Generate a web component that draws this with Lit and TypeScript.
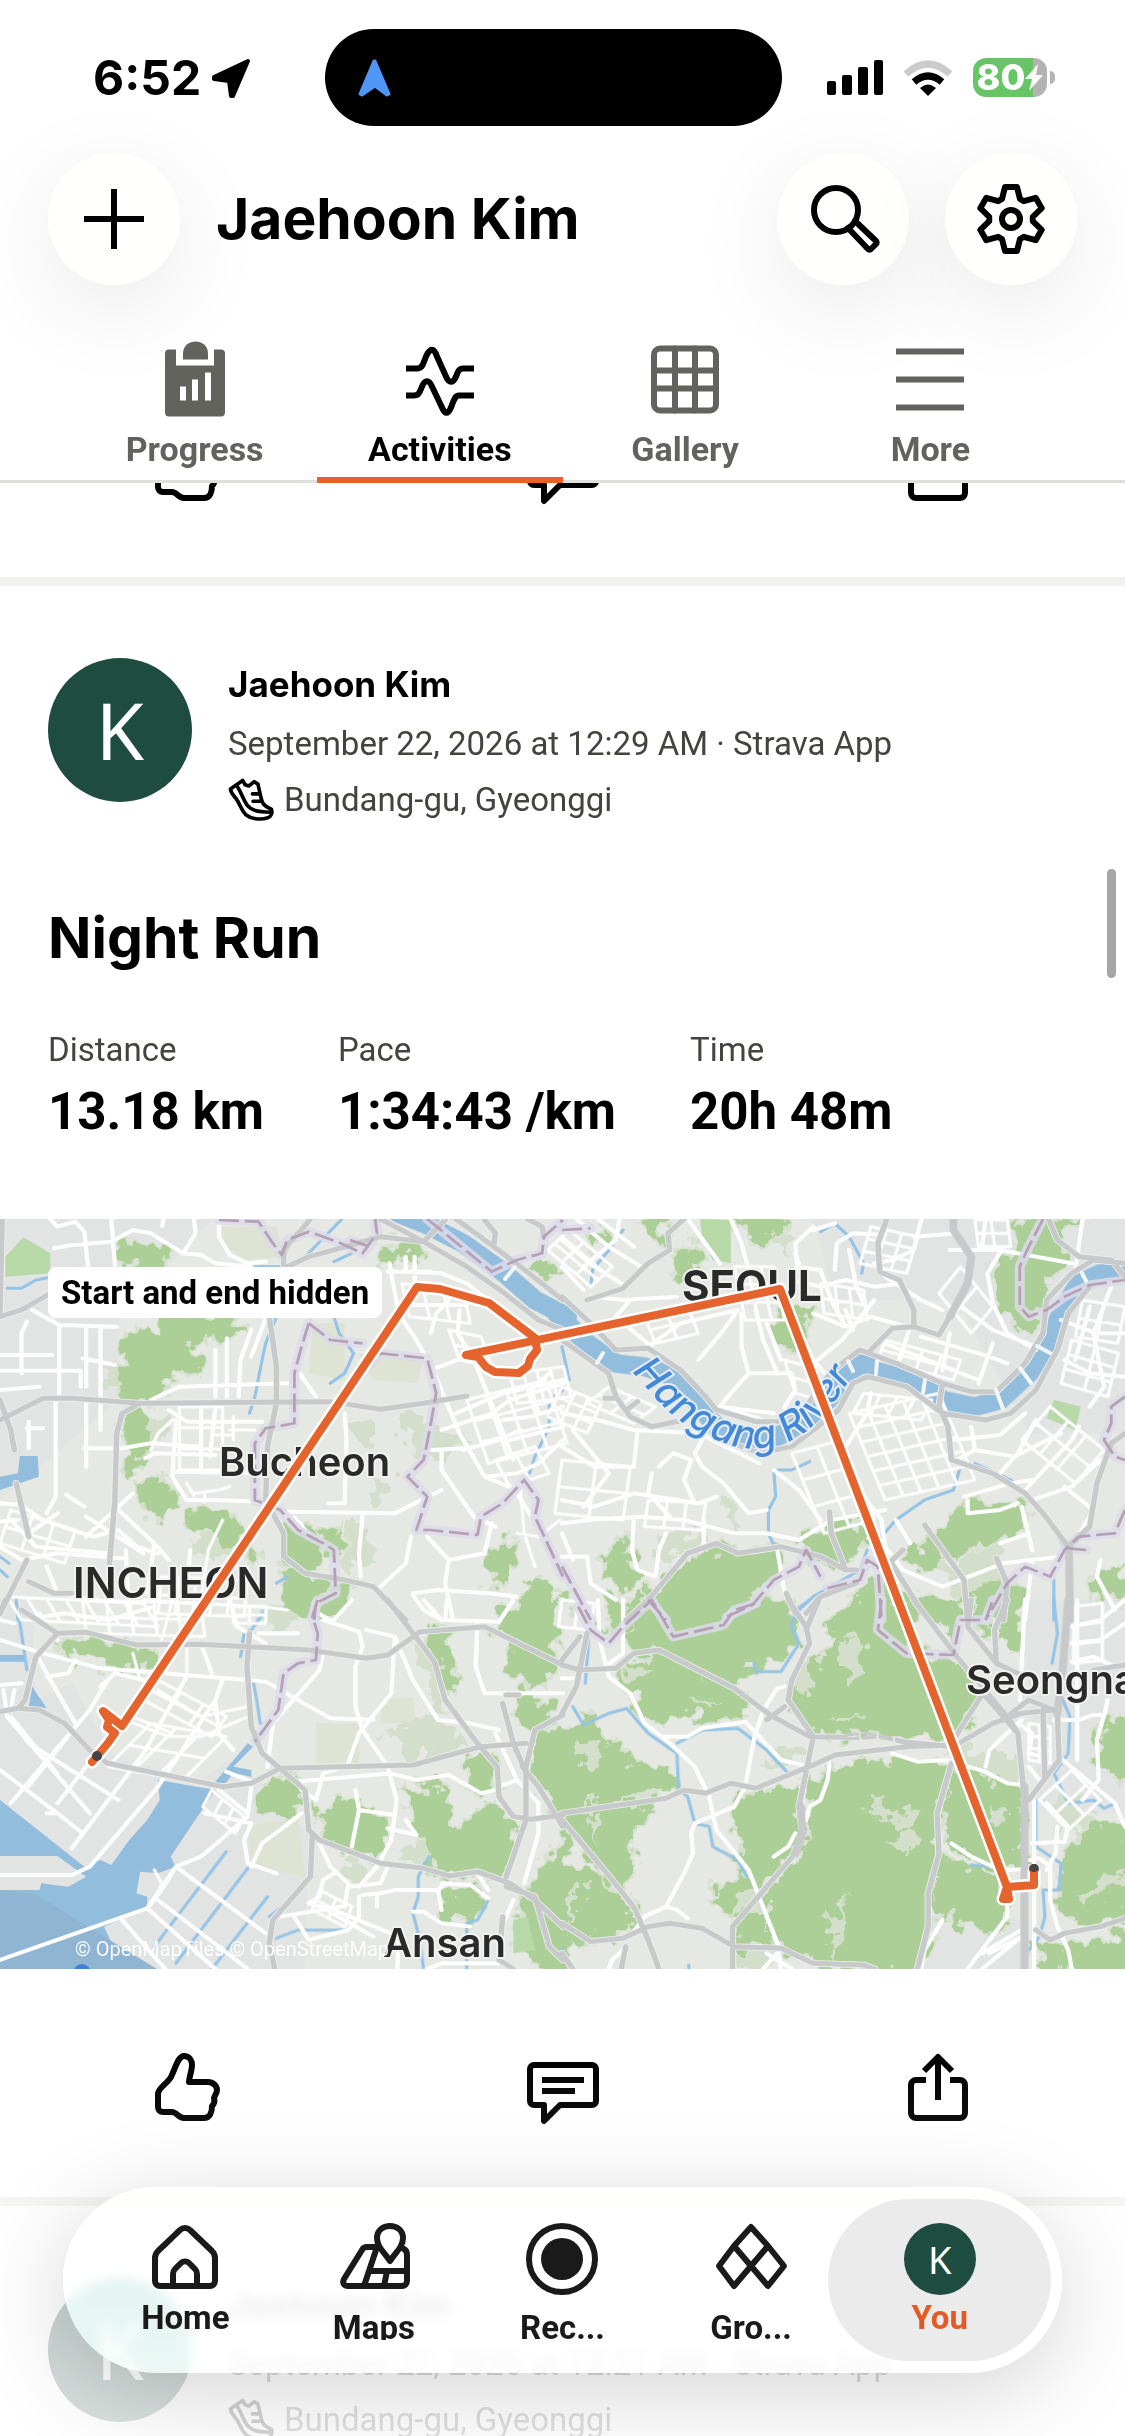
import { LitElement, html, svg, css, nothing } from "lit";
import { customElement, property } from "lit/decorators.js";

/* ---------- map data ---------- */

/** Street grid spanned by the vectors u and v, with nu x nv blocks. */
const grid = (
  x: number, y: number, ux: number, uy: number, vx: number, vy: number, nu: number, nv: number,
): string => {
  let d = "";
  for (let j = 0; j <= nv; j++) {
    const a = x + (vx * j) / nv, b = y + (vy * j) / nv;
    d += `M${a} ${b}l${ux} ${uy}`;
  }
  for (let i = 0; i <= nu; i++) {
    const a = x + (ux * i) / nu, b = y + (uy * i) / nu;
    d += `M${a} ${b}l${vx} ${vy}`;
  }
  return d;
};

interface Tile {
  at: string;
  land: string;
  sand: string;
  pale: string;
  green: string;
  park: string;
  sea: string;
  islands: string;
  river: string;
  creek: string;
  street: string;
  minor: string;
  road: string;
  wide: string;
  border: string;
}

const S = "scale(0.359 0.3333)";

const tiles: Tile[] = [
  {
    at: `translate(0 -19) ${S}`,
    land: "M0 50H600L330 350V600L0 900Z",
    sand: "M620 80 770 80 790 170 680 180 620 130ZM870 370 960 370 960 540 860 520ZM1000 460 1180 480 1160 550 1040 540Z",
    pale: "M410 640 480 650 450 740 415 730ZM980 670 1050 660 1040 740 1000 740ZM1110 650 1200 640 1230 700 1290 700 1290 750 1200 780 1130 740ZM1020 830 1100 830 1100 880 1040 915ZM960 960 1010 960 1050 1090 960 1110ZM520 1010 600 1000 690 1060 640 1090 540 1060ZM290 500 330 500 330 570 290 570Z",
    green: "M325 140 345 130 400 140 470 135 460 200 400 195 335 200ZM360 400 400 385 460 400 450 350 640 350 690 395 620 412 530 430 560 520 500 510 460 540 430 600 380 600 330 560 340 460ZM345 640 380 625 410 670 415 740 390 780 360 820 340 790 370 740 345 690ZM395 850 470 850 480 915 440 945 400 925ZM535 940 600 935 650 960 680 1010 630 1040 600 1000 540 975ZM690 1040 720 1045 720 1090 700 1090ZM795 980 830 975 900 1020 880 1100 800 1095ZM900 1000 940 990 945 1050 920 1060ZM790 1120 860 1110 900 1150 890 1210 850 1240 800 1230ZM930 1150 975 1150 970 1200 930 1240 900 1230ZM1055 130 1170 135 1165 165 1120 160 1095 195 1065 180ZM1465 195 1520 185 1545 215 1520 240ZM1400 1025 1430 1020 1425 1100 1405 1145 1365 1150 1365 1080ZM1480 1150 1530 1150 1530 1200 1460 1210Z",
    park: "M15 230 15 170 65 112 140 160 140 220Z",
    sea: "M55 768 105 768 108 830 0 870 0 830 50 820Z",
    islands: "",
    river: "M1110 40 1190 75 1290 130 1400 215 1490 300 1580 350",
    creek: "M20 265 60 265 100 240 140 232M950 60 850 170 800 200 700 200M980 160 930 185M770 350 740 430 730 480 710 590 695 640M930 350 945 400 985 460 960 520 920 550M1568 570 1530 600 1530 680 1490 770 1475 820M45 1200 50 1260M0 1070 25 1090M0 1110 20 1130M770 1150 800 1130",
    street:
      "M140 57 160 80 210 65 235 95 245 200M310 57 320 195M150 145 200 135 310 125 370 90 420 100 510 160 560 165 600 190 700 200M540 57 545 100 510 160M610 57 610 110 640 165 690 190 740 185M455 57 452 78M0 465H145M230 475 320 495M0 512H225V560M0 570 110 560M75 365 60 400 60 520M165 375 165 600M90 330 165 375 325 380M240 380 240 560M280 380V690M240 610V800M75 685H120M80 665V745M155 600V890L130 940M235 745H340L420 730 560 740M600 450V590M632 415V590M700 390 670 480 665 590M420 600 500 560 800 550M470 630 520 665 730 665M490 660 480 830 520 900 590 900 720 905M560 630V800M600 620 585 770M405 775 430 760 600 765M490 815 720 820M740 355 700 470M835 520 880 590M960 640 965 720 960 910 915 910M800 935 1100 940 1230 870M1010 945 1000 1060 1005 1130M0 910 60 915 110 955 200 990 260 1010 330 990 380 1040 440 1060M30 960 100 1040 300 1060M0 1040 60 1080 160 1060 340 1075M370 880 300 950 240 1010M185 885 235 920M330 930 430 1030 470 1080M0 965 50 960M80 1000 160 940M240 950 400 1060M130 1100 160 1180 270 1200M430 1030 410 1180M530 1050 520 1180M350 1050 360 1250M1085 190 1110 340 1160 420 1210 520 1280 700 1350 830 1440 870M1130 170V215L1230 220 1300 250 1370 310M1155 170V240M1080 215H1200M1150 315H1300M1280 330 1275 400 1320 480 1380 640 1430 780M1200 510 1300 470M1200 400 1215 340 1250 300M1230 690 1370 640 1420 600 1568 550M1270 640 1400 580 1568 540M1290 750 1390 720 1450 690M1200 750 1300 745M1350 830 1440 820 1500 790 1568 720M1230 750V810L1320 950 1380 980M1145 1010 1130 1090 1060 1160M1190 1010 1250 1080 1350 1060 1370 970M1440 880 1480 950M1250 1080 1240 1150 1260 1250M1150 1185 1180 1230 1230 1260M1150 1180 1220 1170 1360 1180 1440 1190M1568 620 1480 650 1400 660M1568 680 1420 720M1530 520 1480 570 1500 640",
    minor:
      grid(20, 1190, 380, 20, 40, 70, 7, 1) + grid(1300, 600, 220, -60, 60, 190, 4, 3) + grid(500, 620, 120, 0, 0, 190, 2, 3) +
      grid(1120, 250, 170, 20, 20, 100, 3, 1) + grid(1420, 520, 150, -20, 20, 90, 4, 2) + grid(450, 1130, 240, 10, -10, 110, 5, 2) +
      grid(30, 930, 180, 60, -30, 100, 3, 2) + grid(1250, 390, 90, 20, 30, 90, 1, 2) + grid(1380, 780, 110, -40, 40, 80, 2, 1) +
      "M420 750 440 700 480 660M540 880 610 870 640 860M860 1000 820 950M1440 1000 1500 1010 1560 960M620 960 580 1050 560 1200M1450 870 1460 1000 1490 1100M400 1200 550 1210 730 1220 800 1230M640 690H710M650 650V720M590 705H650M520 850 540 885M570 885V905",
    road: "M6 57 0 340M0 350 60 330 140 280M0 660 120 595 200 595 390 610 920 605 1060 628 1180 610 1300 588M0 600 30 690 40 750M45 850 80 1010M390 610 340 640 325 700 320 900 305 1090M75 1080 0 1240M80 1145 150 1180 200 1180M865 57 790 150 790 200M750 350 770 500 770 610 745 740 740 900 790 1000 790 1070 850 1120 960 1140 1040 1160 1130 1260M1060 57 1180 125 1300 200 1400 275 1500 360 1568 390M800 200 860 170 930 150 1060 110 1180 125 1240 60M1270 57 1350 120 1450 200 1568 300M1350 60 1380 100 1375 140M1470 57 1510 80 1515 110",
    wide: "",
    border: "M610 60 720 65 760 130 785 165 800 120 860 95 950 130 1010 160 1050 100 1045 57M975 120 1030 140M860 370 840 440 820 520 820 670 740 685 710 730 710 900 780 930 830 990 900 1030 930 1050 935 1180 880 1210 875 1260M860 370 920 420 1010 430M1010 520 1060 460 1190 475 1215 580 1195 700 1180 780 1135 830 1190 890 1160 990 1200 990 1330 1005 1340 950 1400 910 1460 840 1500 900 1490 950 1568 1130M1190 57 1370 215 1440 180 1510 160 1515 110 1568 60",
  },
  {
    at: `translate(562 -19) ${S}`,
    land: "M700 57H1568V700H1300L1100 300H760Z",
    sand: "",
    pale: "M1050 1110 1230 1020 1240 1130 1120 1200ZM250 1000 380 990 400 1040 260 1080ZM440 900 480 900 490 980 450 960ZM600 100 650 110 640 160 610 150Z",
    green: "M235 57 310 57 280 90 275 145 240 100ZM320 135 370 130 400 190 370 215 360 260 320 200ZM480 57 620 57 610 100 540 115 500 80ZM80 110 120 85 110 130 85 140ZM590 345 680 345 670 440 630 455 600 400ZM1270 57 1440 57 1380 100 1400 180 1340 260 1310 390 1270 380 1220 310 1200 230 1220 170 1270 160ZM130 1030 190 1010 180 1100 210 1150 180 1170 135 1130ZM220 1190 360 1080 430 1050 600 1040 600 1100 520 1200 460 1260 210 1260ZM660 1020 820 950 850 1000 810 1060 760 1110 700 1060ZM960 1080 1130 910 1290 920 1290 990 1180 1030 1080 1070 1050 1110ZM1480 1130 1568 1100 1568 1180 1500 1200ZM820 1180 910 1110 920 1260 800 1260ZM960 1180 1100 1200 1080 1260 960 1260ZM1140 1180 1220 1130 1290 1180 1270 1260 1140 1260ZM130 1200 200 1200 200 1260 140 1260Z",
    park: "M1370 600 1445 620 1430 690 1350 655ZM385 57 470 60 470 190 420 180 390 110Z",
    sea: "",
    islands: "",
    river: "M-12 345 70 430 150 490 230 500 310 530 370 600 430 680 520 720 600 710 680 660 740 600 790 530 830 490 900 510 1000 550 1060 600 1150 620 1220 600 1300 520 1360 420 1390 340 1440 250 1500 220 1568 210",
    creek: "M170 90 130 150 85 210 80 260M720 95 760 70 800 110 840 190 835 220M590 810 595 890 575 930 575 1000 600 1060M600 810 640 810 690 785M890 1010 930 960 1010 900 1090 870 1110 800M1150 790 1250 840 1330 920 1400 1040M850 1050 830 1110 700 1190 650 1240M1370 1140 1370 1260M0 440 20 540",
    street:
      "M0 120 90 200 180 260M40 57 130 140 220 200M100 57 200 140M0 200 60 270M160 57 150 120 60 200M350 57 440 190M470 57 500 130 515 190M650 160 660 190 640 240M700 80 650 130 655 200 720 210M760 210 765 130 810 100 900 105M700 90 760 70M190 300 150 350 250 440M80 290 170 300 320 290M240 440 330 370 490 330M380 480 450 390 490 330M500 340 500 440 520 520 470 580 440 620 590 640M520 520H640L650 570 620 620 625 660M540 330 560 420 600 520M570 370 610 480M440 620 560 660M650 360 700 480 740 530M700 340 790 380 860 350 960 380M790 330 810 390M640 240 720 260 790 240 870 260 950 250M720 210 750 300 790 380M800 150 820 260 850 330M870 300 780 420 700 490M900 230 1000 300 1060 330M980 110 1100 100M1000 60 980 150 920 180 870 190M1080 150 1220 150 1420 190M1180 57 1170 140 1230 150M1225 150 1185 220 1200 310 1240 400 1320 450M1100 310 1200 390 1320 440M1000 410 1190 470 1240 490M900 430 1160 540M970 380 940 480M1080 400 1060 510M1200 430 1160 550M0 640 100 660 200 690 380 700 550 790M0 740 90 800 200 800 210 700M0 900 90 920 200 880 380 910 430 890M30 690 130 820 60 920M250 820 240 880 300 950M270 800 310 760 360 780 340 840 370 910M400 700 370 760 390 800 450 850 520 940 570 930M60 960 220 950 340 960 480 1000 570 1000 660 1020 750 960 900 930M0 970 80 960M590 810 660 870 720 960M200 960 195 1050 210 1110 260 1130 270 1050 290 1000M395 960V1030M0 1070H70L80 1150 150 1200M860 580 850 640 790 740M820 860 890 960 900 1040 950 1110 1060 1160 1230 1090 1390 1070M1090 720 1220 705 1290 640M1100 780 1150 750 1260 770 1390 700M1140 680 1150 750M1130 900 1130 940 1220 930 1270 910M1120 890 1250 850 1310 840M1220 820 1270 760 1320 660M1290 870 1420 720 1440 680M1310 900 1420 860 1500 780M1400 480 1470 520 1568 530M1390 360 1490 400 1568 400M1470 320 1430 480M1530 260 1480 400 1510 560 1470 620M1280 920 1310 1050M1450 57 1430 210M1400 860 1480 930 1420 1040M930 960 970 1030M0 1000 30 1080M1220 1030 1300 1000M600 1050 620 1180M1310 1080 1290 1260M1500 1080 1490 1130 1540 1230",
    minor:
      grid(800, 640, 250, -60, 100, 260, 5, 6) + grid(640, 760, 140, -40, 90, 240, 2, 3) + grid(0, 560, 110, 50, -40, 90, 3, 3) +
      grid(130, 560, 130, 60, -60, 50, 2, 2) + grid(860, 80, 130, 30, -30, 110, 3, 3) + grid(1150, 60, 90, 0, 10, 80, 2, 2) +
      grid(20, 90, 120, 110, -60, 60, 3, 3) + grid(1280, 720, 150, 130, 80, -100, 3, 2) + grid(1420, 420, 130, 40, -30, 130, 2, 3) +
      grid(480, 200, 110, 0, 30, 160, 3, 3) + grid(900, 420, 210, 60, -20, 60, 4, 2) + grid(840, 580, 190, 20, -30, 60, 4, 1) + grid(230, 350, 120, -30, 30, 80, 2, 2) +
      grid(0, 780, 190, 20, -20, 160, 2, 2) + grid(720, 250, 120, 20, 10, 90, 3, 2) + grid(1110, 200, 90, 120, -60, 80, 2, 1) +
      grid(1450, 300, 118, 20, -20, 110, 2, 2) + grid(240, 900, 160, 10, -10, 80, 3, 1) + grid(620, 480, 70, 20, 30, 100, 1, 2),
    road: "M0 290 80 370 150 450 240 445 330 510 400 590 430 630 540 665 600 665 680 620 740 530 780 490 830 450 930 490 1060 550 1140 575 1210 575 1290 490 1340 400 1350 300 1420 220 1480 180 1568 190M0 420 130 520 150 590 190 650 250 680 340 660M440 715 550 760 640 740 700 690 770 630 810 550 850 530 960 560 1060 640 1180 660 1250 640 1320 570 1380 450 1410 340 1470 260M120 595H150M180 630 210 605M70 300 170 265 240 190 300 150 295 100 340 57M905 57 880 130 885 215 940 240 980 330 980 380 920 385 860 450M980 380 1050 405 1080 350M1060 550 1050 620 1075 680 1085 780 1200 820 1290 880 1340 940 1410 1040 1470 980 1490 850 1530 730 1568 700M745 935 750 1000 790 1110M240 1200 350 1060 430 1030 490 1060 610 1040 720 1070 790 1110 820 1110M1010 975 1120 1140 1130 1260M950 1050 915 1085 1000 1230M1210 1075 1240 1150 1230 1260M240 1200 180 1260M1355 57 1380 120 1440 170 1530 180 1568 230M680 1240 720 1190 820 1150M625 1180 650 1240",
    wide: "M1080 350 1130 250 1140 170 1090 90 1090 57M1412 1040 1415 1260",
    border: "M0 90 80 85M0 1100 50 1200 80 1260M460 1250 530 1215 590 1140 660 1100 680 1050 720 1130M740 1165 830 1140 850 1080 880 1100 890 1260M1340 57 1300 140 1275 200 1275 320 1300 350 1350 330 1400 290 1470 255 1568 240M1568 590 1530 620 1530 670 1510 720 1540 770 1568 780M1568 930 1540 1000 1440 1010 1400 1050 1360 1130 1290 1100 1240 1150 1180 1260M1410 1045 1460 1050M240 1200 290 1260",
  },
  {
    at: `translate(0 381) ${S}`,
    land: "M0 0H90L100 300 200 250 320 470 560 540 640 480 720 540 860 700 850 1107H0Z",
    sand: "M690 680 830 650 850 830 700 800ZM1060 300 1150 290 1160 370 1060 370ZM880 370 1000 370 1000 490 880 490Z",
    pale: "M1060 400 1200 330 1320 440 1160 470ZM1100 770 1200 700 1200 800ZM1150 130 1210 110 1250 330 1200 300ZM730 40 820 30 820 80 750 80ZM960 790 1030 790 1010 850 970 850Z",
    green: "M160 130 250 115 310 130 430 160 440 205 380 200 290 190 200 170ZM795 0 950 0 900 50 830 30ZM1190 100 1250 100 1270 270 1240 250ZM1400 30 1530 0 1568 0 1540 100 1550 200 1480 270 1430 220 1440 120 1390 90ZM1300 470 1360 460 1380 570 1310 560ZM1500 400 1580 380 1580 720 1540 600 1480 520ZM1130 570 1235 550 1240 640 1290 680 1360 620 1400 650 1430 680 1400 830 1250 820 1190 790 1200 730 1160 700ZM880 630 990 600 1000 640 1075 650 1060 780 960 740 900 690ZM720 600 760 540 830 545 840 620 780 635ZM1480 850 1580 690 1580 1120 1510 1120 1440 1000ZM1240 890 1330 870 1360 910 1310 940 1280 965 1240 950ZM1450 300 1530 300 1530 360 1480 380 1450 350Z",
    park: "M1430 960 1470 950 1490 1050 1430 1060Z",
    sea: "M0 600 235 800 280 780 310 795 360 720 410 660 445 600 440 540 600 570 475 770 490 800 440 820 390 815 380 880 410 890 410 925 290 980 320 1050 460 1120 0 1120ZM600 545 690 430 705 440 650 500 700 510 700 530 650 520 610 575ZM90 260 130 325 80 320ZM0 165H70V185H0Z",
    islands: "M0 768H160L240 830 190 860 115 850 110 870H0Z",
    river: "",
    creek: "M50 30 75 210M740 30 700 90 680 100 670 170M705 240 715 300 725 370M630 755 500 940M690 805 490 1090M745 890 590 1107M810 900 750 950M770 1015 830 990 970 990M1195 770 1165 830 1165 890 1150 940 1165 1000 1180 1107M1360 900 1330 960 1300 970 1300 1107M500 940 430 1040",
    street:
      "M0 825H200L250 800 440 560 600 300M0 1080 410 925 490 800 560 770 690 650 700 560M20 350 250 640M30 350 80 430 330 600M0 510 160 640 230 700M200 745 400 460 520 230M30 610 250 330 300 240M160 610 240 500M130 640 160 640M0 120 120 160 280 205 690 240M0 255 60 250M10 270 20 350M40 270 30 330M130 230 190 220 210 180M110 40 160 120M120 50 180 40 300 60 430 20M280 260 320 220 400 240M100 160 140 240 210 370M560 130 590 220M620 240 600 300 610 400 650 450M640 0 660 80 740 130M720 100H830M0 60 40 70M690 240 740 245 920 355 1040 360M900 60 1000 95 1010 140 990 200 990 320 1010 390 1080 500 1105 600 1090 720 1050 800 1000 860M930 60 980 0M1020 90 1100 110 1150 240 1220 360 1310 370 1390 390M1100 110 1090 280 1000 400 970 490M920 60 870 30M900 160 890 210 760 370 745 500M1180 0 1230 60 1390 65 1430 0M1240 60 1245 0M1330 70 1325 200 1350 280H1568M1380 400 1440 540 1500 610 1500 700 1460 850M1440 540 1390 560M820 545 1090 520 1160 540 1250 525 1340 580 1380 570M840 570 880 600 900 520 960 500M990 570 1000 630 1100 645M1000 630 980 740M1080 685 1160 705 1130 660M630 515 700 545M570 640 700 670 680 720 690 790 770 820M610 570 690 640M490 800 740 1000M440 900 690 1107M410 925 600 1107M340 960 460 1107M700 800 730 730 780 690 840 640M890 730 920 800 970 850 960 920M930 820 900 840 890 890 860 910M860 910 930 930 1110 1010 1107 1107M780 950 950 920M970 860 1060 850 1080 800M1010 885 1060 880 1100 870 1220 870 1240 850M1050 920V890M1000 890 1000 950 970 990 860 1020 820 950M1150 935 1180 935 1230 970 1310 980M1220 870 1230 930M1230 850 1310 855 1360 895M1330 820 1360 870M410 925 450 870 490 800M1430 900 1390 1000M910 930 1040 1010M1190 1107 1230 1090 1390 1090",
    minor:
      grid(400, 300, 190, 110, 40, -60, 3, 2) + grid(230, 0, 330, 10, 10, 100, 5, 2) + grid(420, 370, 210, 40, -120, 130, 3, 2) +
      grid(590, 570, 90, 80, -25, 50, 3, 1) + grid(890, 870, 90, 50, -20, 60, 2, 2) + grid(650, 20, 90, 0, 0, 50, 2, 2) +
      "M300 340 470 410 560 410 690 350M370 350 480 400M440 270 560 350 690 320M480 0 450 120M520 130 520 230M370 160 390 240M430 810 450 850 440 880M40 360 100 440 160 520M80 560 190 410",
    road: "M60 30 160 100 240 97 380 135 560 133 860 150 1020 175 1080 165 1170 95 1350 80 1568 195M160 100 100 170 70 300 50 325 0 335M50 325 110 330 180 370 250 450 300 490 620 560 700 550 780 505 1150 495 1340 440 1465 430M695 100 688 200 700 380 730 460 780 505 850 570 860 690 890 720 1060 790 1180 805 1250 828 1330 815 1420 850 1490 900 1568 980M870 700 865 830 760 960 750 1030 765 1107M1080 0 1210 185 1240 300 1330 430 1385 500 1390 590 1430 650 1480 658 1568 645M1400 310 1430 430 1470 530M1568 345 1490 390 1465 500 1465 660 1410 830M1410 860 1490 890 1530 1040 1568 1080M1400 950 1390 1080 1430 1107M1455 500 1500 560 1568 680M0 40 15 0M1410 285H1445",
    wide: "",
    border: "M885 0 870 50 885 100 880 180 830 190 790 220 775 330 710 425",
  },
  {
    at: `translate(562 381) ${S}`,
    land: "M1280 0H1568V640H1330ZM1040 930 1290 960V1107H1010Z",
    sand: "",
    pale: "M1070 450 1280 460 1280 590 1100 510ZM420 870 560 800 580 900 480 960ZM480 1050 590 1050 600 1107 490 1107ZM600 430 680 430 640 500 560 500ZM1380 560 1500 640 1440 700 1390 680Z",
    green: "M210 60 260 0 640 0 650 60 640 130 600 190 540 190 480 260 300 160 200 150 170 110ZM160 190 300 170 480 270 520 330 440 370 340 330 290 370 230 350 180 270ZM-12 380 60 370 180 450 200 500 300 500 320 560 -12 630ZM-12 640 260 600 180 720 200 800 150 850 100 800ZM-12 780 100 830 190 920 200 980 100 1020 30 1010 -12 970ZM740 60 860 0 940 0 960 160 1100 180 1160 290 1090 410 700 400 640 300 700 200 750 130ZM480 610 560 580 650 560 660 720 540 860 500 790ZM430 850 510 830 540 860 480 930 420 920ZM700 540 820 480 1080 500 1040 650 1040 780 1020 1000 990 1120 860 1120 680 1080 600 1040 560 900 680 740 700 640ZM490 960 550 940 590 1030 480 1040ZM1090 510 1270 560 1280 800 1200 800 1090 740 1060 640ZM1050 780 1200 830 1240 920 1200 1000 1040 920ZM1000 0 1120 0 1090 120 1040 60ZM1140 0 1200 0 1180 110ZM1230 0 1270 0 1270 150 1220 120ZM1500 370 1580 350 1580 540 1510 520ZM1400 760 1470 680 1580 690 1580 960 1440 970 1380 900ZM1400 1050 1580 1000 1580 1120 1420 1120ZM1330 1040 1400 1050 1400 1120 1330 1120ZM140 20 200 20 180 80 120 80Z",
    park: "",
    sea: "",
    islands: "",
    river: "",
    creek: "M690 0 650 30 640 80 660 130 610 215 540 215 535 190M30 320 60 375 130 340 180 325 240 400 320 460 325 570 350 590 370 670 410 680 420 740 490 780 515 830M320 430 390 390 490 385 570 450 630 520M1370 0 1380 100 1365 190M1395 300 1415 350 1410 460 1370 520 1410 610 1480 600 1510 625 1540 610M1320 600 1320 740 1390 790 1385 870 1340 870 1345 950 1330 1010 1300 1050M545 870 560 920M75 100 65 250M0 1050 15 1075M1140 795 1190 800M353 1095V1107",
    street:
      "M100 0 105 120 130 230 190 280 230 370 290 420 370 500 410 590 430 690 520 810 560 920 600 1030 610 1107M280 410H350L390 385 510 365 550 410 610 480 670 495M540 400 560 330 600 265 620 260M540 390 510 560 480 620 370 670 360 700 365 760 340 820 320 860 290 920 230 950 190 1010M290 920 320 930 350 955M170 0V160M745 490 740 540 720 600 690 620 680 660M650 700 630 740 590 770M920 460 990 485 1070 480 1130 500 1180 515 1240 550 1280 555M1085 730 1140 770 1200 800M1290 0 1285 100 1275 300M1180 500 1190 450 1250 390M1270 370 1310 400 1300 460 1340 470M1435 0V480M1420 80 1500 60 1568 0M1420 130 1500 120 1568 70M1420 185 1480 170 1540 200M1370 360 1440 360 1480 345 1510 345 1490 420 1495 540 1450 600M1520 300 1510 350M1300 500 1330 540M1395 480 1540 610 1568 680M1315 600V1107M1310 730 1400 725 1410 680 1350 610M1380 680 1375 760 1350 810M1300 780 1330 775 1360 800 1360 900 1380 980 1410 1050 1420 1107M1240 810 1280 808M1240 920 1240 950 1170 1050 1130 1107M1170 1060 1280 990M1190 1060 1280 1010 1170 1107M1060 960 1010 1050 1000 1107M600 1060 560 1107M180 1040 140 1080 130 1107M170 160 120 200M0 235H40M570 1060 640 1107M1280 360 1240 400",
    minor: grid(1330, 600, 90, -90, 80, 90, 2, 2) + grid(1425, 20, 80, -10, 0, 170, 1, 3) + grid(0, 0, 90, 10, -10, 80, 2, 1) + grid(1300, 370, 60, 10, 0, 110, 2, 3),
    road: "M0 195 50 210 150 205 200 160 270 150 480 265 580 345 690 410 790 412M950 425 1090 440 1200 370 1280 340 1370 330M0 640 290 595 340 570 400 580 470 550 540 565 700 495 760 465 960 440 1090 435M0 660 110 800 200 920 240 1020 270 1107M0 970 80 1025 170 1015 240 980 300 970 390 985 480 1040 610 1045 700 1090 840 1095 870 1107M475 1107 475 980 650 760 670 700 660 620 700 410 630 300 640 240 690 130 680 80 630 0M680 90 715 0M1085 490 1045 640 1050 760 1020 880 1020 980 990 1107M0 340 40 260 70 100M980 0 1100 170 1240 350 1270 400 1285 560M1140 0 1130 80 1210 190 1290 230M1240 0 1205 90 1210 190M1380 340 1385 480 1300 600M1340 330 1345 530M1090 420 1190 250M1320 990 1360 1020 1400 1000 1500 980 1568 955M1480 210 1568 195M570 360 620 320M1180 290 1270 400M1240 350 1300 300 1370 330M178 1040 165 1107M0 1060 30 1107M0 180 50 110",
    wide: "M1288 560V1107M1410 0 1395 200 1380 340M650 760 670 700 665 620",
    border: "M45 20 80 90 130 130 170 80 250 0 310 110 450 75 480 30 540 10M890 0 880 90 960 160 1090 165 1110 60 1180 60 1200 0",
  },
];

const clearings =
  "M760 100 800 90 835 180 825 265 785 250 800 190ZM850 620 900 610 930 650 980 620 990 660 960 690 1000 720 940 700ZM740 930 760 960 790 900 780 1050 750 1080 760 1000 735 960ZM170 190 280 240 200 240ZM340 270 450 320 360 310ZM40 440 110 420 90 520 60 500ZM0 900 60 840 30 960ZM1180 610 1260 640 1200 680ZM1420 900 1568 800 1568 830 1460 920ZM720 350 850 350 790 370ZM160 20 190 0 180 40ZM80 640 110 640 90 720ZM640 200 700 180 700 260 640 270ZM900 720 1000 700 960 760Z";

const routeD =
  "M92 543 108 524 115 514 107 508 109 501 103 492 122 507 417 68 440 70 489 84 535 119 537 131 530 140 528 147 519 154 495 153 486 148 478 138 466 136 780 70 1007 668 1009 680 1003 680 1007 668 1034 666 1034 652";

@customElement("activity-map")
class ActivityMap extends LitElement {
  static styles = css`
    :host { display: block; position: relative; overflow: hidden; }
    .map { display: block; width: 100%; height: auto; background: #e6e8e3; }
    .line { fill: none; stroke-linecap: round; stroke-linejoin: round; }
    .land { fill: #e2e4e4; }
    .sand { fill: #dfe3d3; }
    .pale { fill: #d3dfca; }
    .verge { fill: #d7e1cf; stroke: #d7e1cf; stroke-width: 26; stroke-linejoin: round; }
    .green { fill: #abcf96; stroke: #abcf96; stroke-width: 8; stroke-linejoin: round; }
    .park { fill: #b6d9a7; }
    .sea { fill: #92bddc; }
    .river { stroke: #92bddc; stroke-width: 56; }
    .creek { stroke: #96c4e6; stroke-width: 9; }
    .street { stroke: #fdfdfd; stroke-width: 12; }
    .minor { stroke: #fdfdfd; stroke-width: 9; }
    .road-edge { stroke: #eceeec; stroke-width: 20; }
    .road { stroke: #c7c9cb; stroke-width: 15; }
    .wide { stroke: #c7c9cb; stroke-width: 22; }
    .halo { stroke: #dcdaea; stroke-width: 28; opacity: 0.85; }
    .dash { stroke: #b5a1b3; stroke-width: 8; stroke-dasharray: 56 16; stroke-linecap: butt; }
    .city {
      font-family: Inter, "Liberation Sans", sans-serif; font-size: 40px; font-weight: 600; fill: #2a2a2a;
      stroke: #f2f3f0; stroke-width: 4px; paint-order: stroke; stroke-linejoin: round;
    }
    .large { font-size: 42px; }
    .capital { font-size: 42px; font-weight: 700; }
    .hangang {
      font-family: Inter, "Liberation Sans", sans-serif; font-size: 39px; font-weight: 500; font-style: italic; fill: #4488d8;
      stroke: #e4edf4; stroke-width: 4px; paint-order: stroke;
    }
    .credit { font-family: Roboto, "Liberation Sans", sans-serif; font-size: 20px; fill: #fff; opacity: 0.9; }
    .case { stroke: #fff; stroke-width: 13; }
    .track { stroke: #e5642d; stroke-width: 8; }
    .badge {
      position: absolute; left: 48px; top: 48px; padding: 0 13px; border-radius: 8px; background: #fff; color: #000;
      font: 700 33px/51px var(--text);
    }
  `;

  private layer(key: keyof Tile, cls: string) {
    return svg`${tiles.map((t) => (t[key] ? svg`<g transform=${t.at}><path class=${cls} d=${t[key]}></path></g>` : nothing))}`;
  }

  render() {
    return html`
      <svg class="map" viewBox="0 0 1125 750" role="img" aria-label="Route map">
        <defs>
          <filter id="rough" x="0" y="0" width="100%" height="100%" filterUnits="userSpaceOnUse">
            <feTurbulence type="fractalNoise" baseFrequency="0.06" numOctaves="3" seed="4" />
            <feDisplacementMap in="SourceGraphic" scale="34" xChannelSelector="R" yChannelSelector="G" />
          </filter>
          <path id="river-line" d="M632 153C650 172 668 196 690 208C712 220 735 230 758 230C790 227 812 211 828 191C838 178 850 162 864 138" />
        </defs>
        ${this.layer("land", "land")} ${this.layer("sand", "sand")}
        <g filter="url(#rough)">
          ${this.layer("green", "verge")} ${this.layer("pale", "pale")} ${this.layer("green", "green")}
          <g transform=${tiles[3].at}><path class="pale" d=${clearings}></path></g>
        </g>
        ${this.layer("park", "park")} ${this.layer("sea", "sea")} ${this.layer("islands", "land")}
        <path d="M0 671 35 675 165 755 0 755Z" fill="#8fb5d3"></path>
        ${this.layer("river", "line river")} ${this.layer("creek", "line creek")}
        ${this.layer("minor", "line minor")} ${this.layer("street", "line street")}
        ${this.layer("road", "line road-edge")} ${this.layer("border", "line halo")}
        ${this.layer("road", "line road")} ${this.layer("wide", "line wide")} ${this.layer("border", "line dash")}
        <path class="line" stroke="#c7c9cb" stroke-width="3" stroke-dasharray="12 5" d="M846 516 865 514 905 522M846 520 880 518 905 524"></path>
        <path class="line" stroke="#f3f6f7" stroke-width="4" d="M597 144 603 134M505 60 515 48M848 142 853 152M877 142 876 155M925 161 923 174M996 171 1003 190M1020 149 1031 164M1037 127 1050 134M1082 54 1086 62"></path>
        <circle cx="82" cy="754" r="9" fill="#3f80d8"></circle>
        <text class="city" x="219" y="257">Bucheon</text>
        <text class="city large" x="73" y="379">INCHEON</text>
        <text class="city capital" x="682" y="82">SEOUL</text>
        <text class="city" x="383" y="738">Ansan</text>
        <text class="city" x="966" y="475">Seongnam</text>
        <text class="hangang"><textPath href="#river-line">Hangang River</textPath></text>
        <text class="credit" x="75" y="737">© OpenMapTiles © OpenStreetMap</text>
        <path class="line case" d=${routeD}></path>
        <circle cx="1034" cy="650" r="5" fill="#444"></circle>
        <path class="line track" d=${routeD}></path>
        <circle cx="97" cy="537" r="5" fill="#444"></circle>
        <circle cx="1034" cy="649" r="4" fill="#444"></circle>
      </svg>
      <span class="badge">Start and end hidden</span>
    `;
  }
}

/* ---------- icons ---------- */

const gearPath = (() => {
  const tooth = [[-9, -20], [-6, -32], [6, -32], [9, -20]];
  const pts: string[] = [];
  for (let k = 0; k < 6; k++) {
    const a = (k * Math.PI) / 3;
    for (const [x, y] of tooth) {
      pts.push(`${(36 + x * Math.cos(a) - y * Math.sin(a)).toFixed(1)} ${(36 + x * Math.sin(a) + y * Math.cos(a)).toFixed(1)}`);
    }
  }
  return `M${pts.join("L")}Z`;
})();

const glyphs = {
  plus: svg`<path d="M36 6v60M6 36h60" stroke-linecap="butt"></path>`,
  search: svg`<circle cx="29" cy="27" r="22"></circle><path d="M41 45 61 66a2 2 0 0 0 3 0l5-5a2 2 0 0 0 0-3L48 38"></path>`,
  gear: svg`<path d=${gearPath}></path><circle cx="36" cy="36" r="9"></circle>`,
  progress: svg`<g fill="currentColor" stroke="none"><path d="M10 6h7v16h38V6h7a4 4 0 0 1 4 4v59a4 4 0 0 1-4 4H10a4 4 0 0 1-4-4V10a4 4 0 0 1 4-4z"></path><path d="M24 16v-6c0-16 25-16 25 0v6z"></path></g><path stroke="#fff" stroke-linecap="butt" d="M24 57V43M36 57V36M49 57V29"></path>`,
  activities: svg`<path stroke-linecap="butt" d="M2 25h11c5 0 6-4 9-12 4-9 8-9 11 0l9 20c3 7 7 7 10 0 2-5 3-8 7-8h11M2 52h8c5 0 6-4 8-9 3-7 7-7 10 0l10 21c3 7 6 7 9 0 3-8 4-12 8-12h15"></path>`,
  gallery: svg`<rect x="5" y="5" width="62" height="62" rx="6"></rect><path d="M26 5v62M46 5v62M5 27h62M5 45h62"></path>`,
  more: svg`<path stroke-linecap="butt" d="M2 8h68M2 36h68M2 64h68"></path>`,
  like: svg`<path d="M32 3c5 0 8 4 8 9 0 6-3 12-3 17h19c5 0 9 4 9 8 0 3-2 5-3 8 1 3 0 6-2 8 0 6-2 12-8 12H32c-6 0-7-6-12-6h-9c-3 0-5-2-5-5V41c0-6 9-10 13-17 4-8 7-21 13-21z"></path>`,
  comment: svg`<path d="M7 12h58a4 4 0 0 1 4 4v32a4 4 0 0 1-4 4H33L17 68V52H7a4 4 0 0 1-4-4V16a4 4 0 0 1 4-4z"></path><path stroke-linecap="butt" d="M15 27h42M15 38h33"></path>`,
  share: svg`<path stroke-linecap="butt" d="M24 27H14a5 5 0 0 0-5 5v28a5 5 0 0 0 5 5h44a5 5 0 0 0 5-5V32a5 5 0 0 0-5-5H48M36 47V5M22 18 36 4l14 14"></path>`,
  home: svg`<path d="M31 7a7 7 0 0 1 10 0l22 21c2 2 3 4 3 7v23a5 5 0 0 1-5 5H11a5 5 0 0 1-5-5V35c0-3 1-5 3-7z"></path><path d="M24 63V51c0-2 1-4 2-5l6-6a6 6 0 0 1 8 0l6 6c1 1 2 3 2 5v12"></path>`,
  maps: svg`<path d="M38 24H29c-3 0-4 1-5 3L6 56c-2 4 0 7 4 7h54a5 5 0 0 0 5-5V32c0-3-1-5-3-6M38 27 26 63M34 48h35M49 48l-3 15"></path><path fill="#fff" d="M52 38C46 29 39 24 39 15c0-16 26-16 26 0 0 9-7 14-13 23z"></path>`,
  record: svg`<circle cx="36" cy="36" r="33"></circle><circle cx="36" cy="36" r="21" fill="currentColor" stroke="none"></circle>`,
  groups: svg`<path d="M36 4 53 23 36 43 19 23zM19 23 4 43 19 63 53 23M53 23 69 43 53 63 19 23"></path>`,
  shoe: svg`<path stroke-width="6" d="M4 18 24 4l4 7 6 2 9-7 6 4 4 18c3 14 5 18 18 23 2 6 0 12-6 14-12 4-28 2-36-5-7-7-9-15-13-22C12 30 5 27 4 18zM16 15c6 9 8 19 15 29 7 9 16 11 38 12M40 26h10M41 38h12"></path>`,
};

@customElement("line-icon")
class LineIcon extends LitElement {
  @property() name: keyof typeof glyphs = "plus";
  static styles = css`
    :host { display: block; flex: none; width: 72px; height: 72px; }
    .glyph {
      display: block; width: 100%; height: 100%; overflow: visible;
      fill: none; stroke: currentColor; stroke-width: 6; stroke-linejoin: round; stroke-linecap: round;
    }
  `;
  render() {
    return html`<svg class="glyph" viewBox="0 0 72 72" aria-hidden="true">${glyphs[this.name]}</svg>`;
  }
}

/* ---------- feed pieces ---------- */

@customElement("action-row")
class ActionRow extends LitElement {
  static styles = css`
    :host { display: grid; grid-template-columns: repeat(3, 1fr); padding: 84px 0 72px; border-bottom: 9px solid #f1f1ef; }
    .action { display: flex; justify-content: center; padding: 0; border: 0; background: none; color: #000; }
  `;
  render() {
    return html`
      <button class="action" aria-label="Like"><line-icon name="like"></line-icon></button>
      <button class="action" aria-label="Comment"><line-icon name="comment"></line-icon></button>
      <button class="action" aria-label="Share"><line-icon name="share"></line-icon></button>
    `;
  }
}

@customElement("athlete-row")
class AthleteRow extends LitElement {
  @property() when = "";
  static styles = css`
    :host { display: flex; gap: 36px; align-items: flex-start; padding: 72px 48px 0; }
    .avatar {
      display: grid; place-items: center; flex: none; width: 144px; height: 144px; border-radius: 50%;
      background: #1f4c41; color: #fff; font: 400 78px/144px "Noto Sans", "Open Sans", sans-serif;
    }
    .who { display: flex; flex-direction: column; min-width: 0; white-space: nowrap; }
    .name { font: 700 35px/52px var(--ui); color: #000; }
    .when { margin-top: 4px; font: 400 33px/60px var(--text); color: #43433f; }
    .place { display: flex; align-items: center; gap: 12px; font: 400 33px/52px var(--text); color: #43433f; }
    .shoe { width: 44px; height: 44px; color: #000; }
  `;
  render() {
    return html`
      <span class="avatar">K</span>
      <div class="who">
        <span class="name">Jaehoon Kim</span>
        <span class="when">${this.when}</span>
        <span class="place"><line-icon class="shoe" name="shoe"></line-icon>Bundang-gu, Gyeonggi</span>
      </div>
    `;
  }
}

const tabs = [
  { icon: "progress", label: "Progress" },
  { icon: "activities", label: "Activities", on: true },
  { icon: "gallery", label: "Gallery" },
  { icon: "more", label: "More" },
] as const;

const navItems = [
  { icon: "home", label: "Home", high: true },
  { icon: "maps", label: "Maps" },
  { icon: "record", label: "Rec..." },
  { icon: "groups", label: "Gro..." },
] as const;

const stats = [
  ["Distance", "13.18 km"],
  ["Pace", "1:34:43 /km"],
  ["Time", "20h 48m"],
];

@customElement("app-root")
class AppRoot extends LitElement {
  static styles = css`
    :host {
      --ui: Inter, "Liberation Sans", sans-serif;
      --text: Roboto, "Liberation Sans", sans-serif;
      display: flex; flex-direction: column; position: relative; height: 100vh; overflow: hidden;
      background: #fff; color: #000; font-family: var(--ui);
    }
    button { padding: 0; border: 0; background: none; color: inherit; font: inherit; }
    a { color: inherit; text-decoration: none; }

    .top { flex: none; background: #fff; border-bottom: 3px solid #dfdfdb; }
    .status { display: grid; grid-template-columns: 232px 457px 1fr; align-items: center; padding: 29px 70px 0 93px; }
    .clock { display: flex; align-items: center; gap: 10px; font-size: 48px; font-weight: 700; line-height: 56px; }
    .here { width: 40px; height: 40px; }
    .island { display: flex; align-items: center; height: 97px; padding-left: 33px; border-radius: 49px; background: #000; box-sizing: border-box; }
    .pointer { width: 33px; height: 38px; }
    .signals { display: flex; align-items: center; justify-content: flex-end; gap: 20px; }
    .battery { display: flex; align-items: center; }
    .charge {
      display: flex; align-items: center; justify-content: center; width: 74px; height: 39px; border-radius: 13px;
      background: linear-gradient(90deg, #67c565 81%, #b3b3b3 81%); color: #fff; font-size: 36px; font-weight: 800; line-height: 39px;
    }
    .bolt { width: 18px; height: 27px; }
    .nub { width: 5px; height: 13px; margin-left: 3px; border-radius: 0 6px 6px 0; background: #b3b3b3; }

    .bar { display: flex; align-items: center; gap: 36px; margin-top: 27px; padding: 0 48px; }
    .round {
      display: grid; place-items: center; flex: none; width: 132px; height: 132px; border-radius: 50%;
      background: #fffffe; box-shadow: 0 24px 96px rgba(0, 0, 0, 0.09);
    }
    .title { flex: 1; margin: 0; font-size: 57px; font-weight: 700; line-height: 72px; white-space: nowrap; }
    .tabs { display: grid; grid-template-columns: repeat(4, 1fr); margin: 54px 72px -3px; position: relative; }
    .tab {
      display: flex; flex-direction: column; align-items: center; gap: 12px; padding: 3px 0 8px;
      border-bottom: 6px solid transparent; color: #63635d; font: 700 34px/40px var(--text);
    }
    .tab line-icon { height: 75px; }
    .tab.on { color: #000; border-color: #e8602b; }

    .feed { flex: 1; min-height: 0; overflow: hidden; }
    .previous { margin-top: -134px; }
    .heading { margin: 76px 48px 0; font-size: 57px; font-weight: 700; line-height: 72px; }
    .stats { display: flex; gap: 74px; margin: 56px 48px 0; padding-bottom: 79px; }
    .stat { display: flex; flex-direction: column; gap: 14px; }
    .stat dt { font: 400 33px/40px var(--text); color: #43433f; }
    .stat dd { margin: 0; font: 700 51px/56px var(--text); white-space: nowrap; }

    .thumb { position: absolute; top: 869px; right: 9px; width: 9px; height: 109px; border-radius: 5px; background: #a6a6a6; }
    .fade {
      position: absolute; left: 0; right: 0; bottom: 0; height: 386px; pointer-events: none;
      background: linear-gradient(
        rgba(255, 255, 255, 0), rgba(255, 255, 255, 0.06) 19%, rgba(255, 255, 255, 0.3) 40%,
        rgba(255, 255, 255, 0.74) 62%, rgba(255, 255, 255, 0.84)
      );
    }
    .dock {
      position: absolute; left: 63px; right: 63px; bottom: 63px; display: flex; height: 162px; padding: 12px 28px;
      border-radius: 93px; background: rgba(255, 255, 255, 0.72); backdrop-filter: blur(6px) saturate(5);
      box-shadow: 0 20px 96px rgba(0, 0, 0, 0.17); color: #1a1a1a;
    }
    .item {
      position: relative; flex: 1; display: flex; flex-direction: column; align-items: center; padding-top: 24px;
      font: 700 33px/40px var(--text);
    }
    .item span.label { height: 32px; margin-top: 13px; overflow: hidden; }
    .item.high span.label { height: 40px; margin-top: 3px; }
    .item.you { color: #e35a26; z-index: 0; }
    .item.you::before {
      content: ""; position: absolute; z-index: -1; inset: 0 -17px; border-radius: 81px; background: #ebebeb;
    }
    .me {
      display: grid; place-items: center; width: 72px; height: 72px; border-radius: 50%; background: #1f4c41;
      color: #fff; font: 400 38px/72px "Noto Sans", "Open Sans", sans-serif;
    }
  `;

  render() {
    return html`
      <header class="top">
        <div class="status">
          <span class="clock">6:52
            <svg class="here" viewBox="0 0 40 40" aria-hidden="true"><path fill="#000" stroke="#000" stroke-width="4" stroke-linejoin="round" d="M37 3 3 19v2l15 2 2 15h2z"></path></svg>
          </span>
          <div class="island">
            <svg class="pointer" viewBox="0 0 33 38" aria-hidden="true"><path fill="#4f98f7" stroke="#4f98f7" stroke-width="3" stroke-linejoin="round" d="M16 2h1l14 33-2 1-12-9-13 9-2-1z"></path></svg>
          </div>
          <div class="signals">
            <svg width="56" height="35" viewBox="0 0 56 35" aria-hidden="true"><rect y="21" width="9" height="14" rx="2"></rect><rect x="15" y="15" width="10" height="20" rx="2"></rect><rect x="31" y="7" width="10" height="28" rx="2"></rect><rect x="47" width="9" height="35" rx="2"></rect></svg>
            <svg width="50" height="36" viewBox="0 0 50 36" aria-hidden="true"><path d="M25 36 17 28q8-7 16 0z"></path><path fill="none" stroke="#000" stroke-width="7" d="M11 22q14-12 28 0"></path><path fill="none" stroke="#cbcbcb" stroke-width="7" d="M3 14q22-20 44 0"></path></svg>
            <span class="battery">
              <span class="charge">80<svg class="bolt" viewBox="0 0 18 27" aria-hidden="true"><path fill="#fff" d="M13 0 0 15h7L4 27 18 11h-7z"></path></svg></span>
              <span class="nub"></span>
            </span>
          </div>
        </div>
        <div class="bar">
          <button class="round" aria-label="Add"><line-icon name="plus"></line-icon></button>
          <h1 class="title">Jaehoon Kim</h1>
          <button class="round" aria-label="Search"><line-icon name="search"></line-icon></button>
          <button class="round" aria-label="Settings"><line-icon name="gear"></line-icon></button>
        </div>
        <nav class="tabs">
          ${tabs.map((t) => html`
            <button class="tab ${"on" in t ? "on" : ""}"><line-icon name=${t.icon}></line-icon>${t.label}</button>
          `)}
        </nav>
      </header>

      <main class="feed">
        <action-row class="previous"></action-row>
        <article>
          <athlete-row when="September 22, 2026 at 12:29 AM · Strava App"></athlete-row>
          <h2 class="heading">Night Run</h2>
          <dl class="stats">
            ${stats.map(([k, v]) => html`<div class="stat"><dt>${k}</dt><dd>${v}</dd></div>`)}
          </dl>
          <activity-map></activity-map>
          <action-row></action-row>
        </article>
        <article>
          <athlete-row when="September 22, 2026 at 12:21 AM · Strava App"></athlete-row>
        </article>
      </main>

      <div class="thumb"></div>
      <div class="fade"></div>
      <nav class="dock">
        ${navItems.map((n) => html`
          <a class="item ${"high" in n ? "high" : ""}" href="#${n.icon}"><line-icon name=${n.icon}></line-icon><span class="label">${n.label}</span></a>
        `)}
        <a class="item high you" href="#you"><span class="me">K</span><span class="label">You</span></a>
      </nav>
    `;
  }
}
